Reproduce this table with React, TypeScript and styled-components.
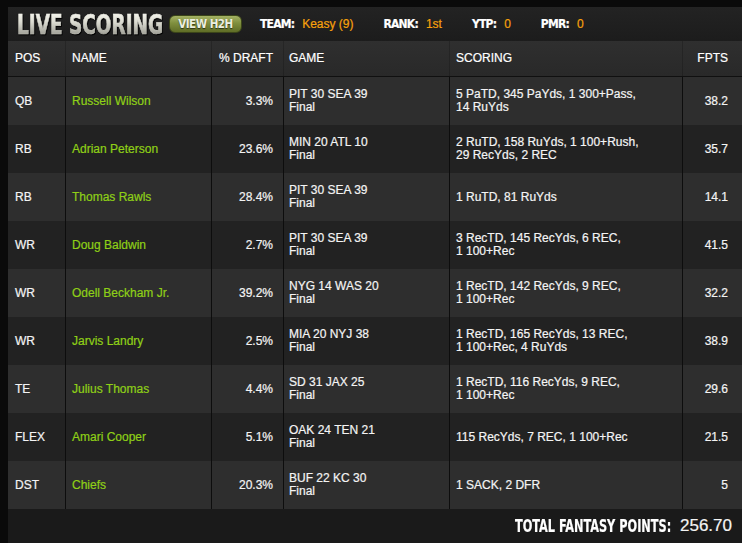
import React from 'react';
import styled, { createGlobalStyle } from 'styled-components';

type Player = {
    pos: string;
    name: string;
    draft: string;
    game: string;
    scoring: string[];
    fpts: string;
};

type Align = 'left' | 'right';

type ColumnDef = {
    key: keyof Player;
    label: string;
    align: Align;
    padLeft: number;
    padRight: number;
};

const columns: ColumnDef[] = [
    { key: 'pos', label: 'POS', align: 'left', padLeft: 7, padRight: 4 },
    { key: 'name', label: 'NAME', align: 'left', padLeft: 6, padRight: 4 },
    { key: 'draft', label: '% DRAFT', align: 'right', padLeft: 4, padRight: 10 },
    { key: 'game', label: 'GAME', align: 'left', padLeft: 5, padRight: 4 },
    { key: 'scoring', label: 'SCORING', align: 'left', padLeft: 6, padRight: 6 },
    { key: 'fpts', label: 'FPTS', align: 'right', padLeft: 4, padRight: 14 },
];

const players: Player[] = [
    { pos: 'QB', name: 'Russell Wilson', draft: '3.3%', game: 'PIT 30 SEA 39', scoring: ['5 PaTD', '345 PaYds', '1 300+Pass', '14 RuYds'], fpts: '38.2' },
    { pos: 'RB', name: 'Adrian Peterson', draft: '23.6%', game: 'MIN 20 ATL 10', scoring: ['2 RuTD', '158 RuYds', '1 100+Rush', '29 RecYds', '2 REC'], fpts: '35.7' },
    { pos: 'RB', name: 'Thomas Rawls', draft: '28.4%', game: 'PIT 30 SEA 39', scoring: ['1 RuTD', '81 RuYds'], fpts: '14.1' },
    { pos: 'WR', name: 'Doug Baldwin', draft: '2.7%', game: 'PIT 30 SEA 39', scoring: ['3 RecTD', '145 RecYds', '6 REC', '1 100+Rec'], fpts: '41.5' },
    { pos: 'WR', name: 'Odell Beckham Jr.', draft: '39.2%', game: 'NYG 14 WAS 20', scoring: ['1 RecTD', '142 RecYds', '9 REC', '1 100+Rec'], fpts: '32.2' },
    { pos: 'WR', name: 'Jarvis Landry', draft: '2.5%', game: 'MIA 20 NYJ 38', scoring: ['1 RecTD', '165 RecYds', '13 REC', '1 100+Rec', '4 RuYds'], fpts: '38.9' },
    { pos: 'TE', name: 'Julius Thomas', draft: '4.4%', game: 'SD 31 JAX 25', scoring: ['1 RecTD', '116 RecYds', '9 REC', '1 100+Rec'], fpts: '29.6' },
    { pos: 'FLEX', name: 'Amari Cooper', draft: '5.1%', game: 'OAK 24 TEN 21', scoring: ['115 RecYds', '7 REC', '1 100+Rec'], fpts: '21.5' },
    { pos: 'DST', name: 'Chiefs', draft: '20.3%', game: 'BUF 22 KC 30', scoring: ['1 SACK', '2 DFR'], fpts: '5' },
];

const stats = [
    { label: 'TEAM:', value: 'Keasy (9)' },
    { label: 'RANK:', value: '1st' },
    { label: 'YTP:', value: '0' },
    { label: 'PMR:', value: '0' },
];

const GlobalStyle = createGlobalStyle`
    html, body {
        margin: 0;
        padding: 0;
        background: #0a0a0a;
    }
    body {
        font-family: "Liberation Sans", Arial, sans-serif;
        font-size: 12px;
        color: #f4f4f4;
        -webkit-text-stroke: 0.2px currentColor;
    }
`;

const Page = styled.div`
    width: 742px;
    height: 543px;
    padding: 7px 0 0 8px;
    box-sizing: border-box;
    overflow: hidden;
`;

const Panel = styled.div`
    width: 734px;
    display: flex;
    flex-direction: column;
`;

const TitleBar = styled.div`
    height: 34px;
    display: flex;
    align-items: center;
    padding-left: 9px;
    background: linear-gradient(180deg, #232323 0%, #1c1c1c 100%);
`;

const TitleBox = styled.div`
    width: 145px;
    flex-shrink: 0;
    white-space: nowrap;
    margin-top: 1px;
`;

const TitleText = styled.span`
    display: inline-block;
    font-family: "DejaVu Sans Condensed", "DejaVu Sans", sans-serif;
    font-weight: bold;
    font-size: 27px;
    line-height: 27px;
    transform: scaleX(0.76);
    transform-origin: left center;
    background: linear-gradient(180deg, #fbfbf4 0%, #dcdcd2 40%, #8f8f86 100%);
    -webkit-background-clip: text;
    background-clip: text;
    color: transparent;
    -webkit-text-stroke: 0.6px rgba(235, 235, 225, 0.35);
    filter: drop-shadow(1px 1px 0 #000);
`;

const H2HButton = styled.button`
    margin-left: 7px;
    width: 73px;
    height: 18px;
    padding: 0;
    border: 1px solid #3b4519;
    border-radius: 6px;
    background: linear-gradient(180deg, #a4b264 0%, #7f8f3e 45%, #5f6d26 100%);
    color: #ecefe0;
    font-family: "DejaVu Sans Condensed", "DejaVu Sans", sans-serif;
    font-weight: bold;
    font-size: 11.5px;
    line-height: 16px;
    letter-spacing: -0.5px;
    text-shadow: 0 1px 1px rgba(0, 0, 0, 0.6);
    -webkit-text-stroke: 0;
    cursor: pointer;
`;

const Stats = styled.div`
    display: flex;
    align-items: center;
    gap: 30px;
    margin-left: 18px;
`;

const Stat = styled.div`
    display: flex;
    align-items: baseline;
    gap: 8px;
    white-space: nowrap;
`;

const StatLabel = styled.span`
    font-family: "DejaVu Sans Condensed", "DejaVu Sans", sans-serif;
    font-weight: bold;
    font-size: 12px;
    letter-spacing: -0.8px;
    color: #ffffff;
`;

const StatValue = styled.span`
    font-size: 12px;
    color: #f7a10c;
`;

const Grid = styled.div`
    display: grid;
    grid-template-columns: 57px 146px 72px 166px 233px 60px;
`;

const HeadRow = styled(Grid)`
    height: 35px;
    border-bottom: 1px solid #101010;
    background: linear-gradient(180deg, #2f2f2f 0%, #292929 100%);
`;

const BodyRow = styled(Grid)<{ $odd: boolean }>`
    height: 48px;
    background: ${(p) => (p.$odd ? '#2e2e2e' : '#222222')};
`;

const Cell = styled.div<{ $align: Align; $padLeft: number; $padRight: number; $divider: string }>`
    display: flex;
    flex-direction: column;
    justify-content: center;
    align-items: ${(p) => (p.$align === 'right' ? 'flex-end' : 'flex-start')};
    text-align: ${(p) => p.$align};
    padding: 0 ${(p) => p.$padRight}px 0 ${(p) => p.$padLeft}px;
    border-left: 1px solid ${(p) => p.$divider};
    line-height: 13px;
    min-width: 0;

    &:first-child {
        border-left: none;
    }
`;

const HeadLabel = styled.span`
    color: #ffffff;
    font-size: 12px;
`;

const NameLink = styled.a`
    color: #8fd017;
    text-decoration: none;
`;

const Scoring = styled.div`
    color: #f4f4f4;
`;

const ScoreItem = styled.span`
    white-space: nowrap;
`;

const Footer = styled.div`
    height: 34px;
    display: flex;
    align-items: center;
    justify-content: flex-end;
    gap: 9px;
    padding-right: 10px;
    background: #1a1a1a;
`;

const FooterLabelBox = styled.div`
    width: 158px;
    display: flex;
    justify-content: flex-end;
    white-space: nowrap;
`;

const FooterLabel = styled.span`
    flex-shrink: 0;
    font-family: "DejaVu Sans Condensed", "DejaVu Sans", sans-serif;
    font-weight: bold;
    font-size: 17px;
    color: #ffffff;
    transform: scaleX(0.74);
    transform-origin: right center;
`;

const FooterValue = styled.span`
    font-size: 17px;
    color: #f4f4f4;
`;

const renderValue = (col: ColumnDef, player: Player) => {
    switch (col.key) {
        case 'name':
            return <NameLink href={'#'}>{player.name}</NameLink>;
        case 'game':
            return (
                <>
                    <span>{player.game}</span>
                    <span>Final</span>
                </>
            );
        case 'scoring':
            return (
                <Scoring>
                    {player.scoring.map((item, i) => (
                        <React.Fragment key={i}>
                            <ScoreItem>
                                {item}
                                {i < player.scoring.length - 1 ? ',' : ''}
                            </ScoreItem>
                            {i < player.scoring.length - 1 ? ' ' : ''}
                        </React.Fragment>
                    ))}
                </Scoring>
            );
        default:
            return <span>{player[col.key] as string}</span>;
    }
};

const App: React.FC = () => {
    const total = players.reduce((sum, p) => sum + parseFloat(p.fpts), 0);

    return (
        <>
            <GlobalStyle />
            <Page>
                <Panel>
                    <TitleBar>
                        <TitleBox>
                            <TitleText>LIVE SCORING</TitleText>
                        </TitleBox>
                        <H2HButton>VIEW H2H</H2HButton>
                        <Stats>
                            {stats.map((s) => (
                                <Stat key={s.label}>
                                    <StatLabel>{s.label}</StatLabel>
                                    <StatValue>{s.value}</StatValue>
                                </Stat>
                            ))}
                        </Stats>
                    </TitleBar>

                    <HeadRow>
                        {columns.map((col) => (
                            <Cell key={col.key} $align={col.align} $padLeft={col.padLeft} $padRight={col.padRight} $divider={'rgba(0,0,0,0.18)'}>
                                <HeadLabel>{col.label}</HeadLabel>
                            </Cell>
                        ))}
                    </HeadRow>

                    {players.map((player, idx) => (
                        <BodyRow key={idx} $odd={idx % 2 === 0}>
                            {columns.map((col) => (
                                <Cell key={col.key} $align={col.align} $padLeft={col.padLeft} $padRight={col.padRight} $divider={'#0d0d0d'}>
                                    {renderValue(col, player)}
                                </Cell>
                            ))}
                        </BodyRow>
                    ))}

                    <Footer>
                        <FooterLabelBox>
                            <FooterLabel>TOTAL FANTASY POINTS:</FooterLabel>
                        </FooterLabelBox>
                        <FooterValue>{total.toFixed(2)}</FooterValue>
                    </Footer>
                </Panel>
            </Page>
        </>
    );
};

export default App;
